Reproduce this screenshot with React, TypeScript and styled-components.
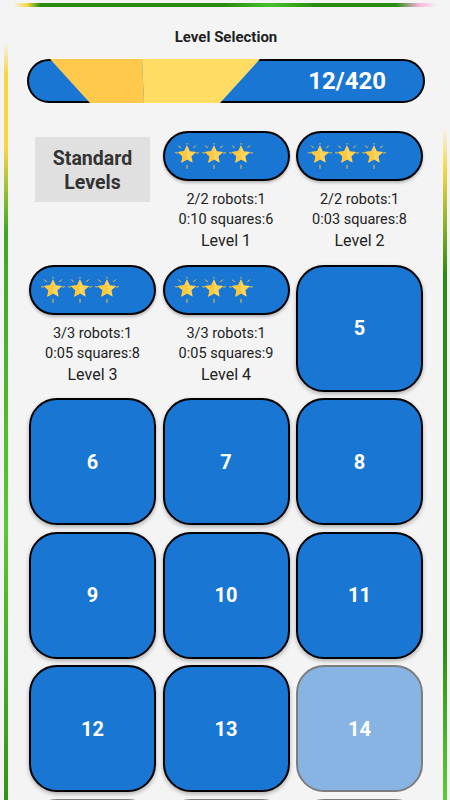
import styled, { createGlobalStyle } from "styled-components";

const GlobalStyle = createGlobalStyle`
  html, body {
    margin: 0;
    padding: 0;
    background: #f4f4f4;
    font-family: Roboto, "Noto Sans", "Liberation Sans", sans-serif;
  }
`;

const Frame = styled.div`
  min-height: 100vh;
  box-sizing: border-box;
  padding: 27px 25px 0 27px;
  background:
    linear-gradient(to right, rgba(244,244,244,0) 3%, #f5d742 6%, #2a8c12 9%, #2a8c12 50%, #45c12a 60%, #2a8c12 70%, #2a8c12 88%, #f7b2d9 93%, rgba(244,244,244,0) 97%) 0 3px / 100% 4px no-repeat,
    linear-gradient(to bottom, rgba(244,244,244,0) 4%, #f5d742 7%, #f5d742 14%, #3aa822 22%, #56c832 50%, #2a8c12 80%, #2a8c12 100%) 4px 0 / 4px 100% no-repeat,
    linear-gradient(to bottom, rgba(244,244,244,0) 12%, #f5d742 16%, #2a8c12 26%, #2a8c12 60%, #5acb35 75%, #2a8c12 100%) 443px 0 / 4px 100% no-repeat,
    #f4f4f4;
`;

const Title = styled.h1`
  margin: 0 0 12px;
  text-align: center;
  font-size: 15px;
  line-height: 20px;
  font-weight: 700;
  color: #222;
`;

const ProgressBar = styled.div`
  position: relative;
  height: 44px;
  box-sizing: border-box;
  border: 2px solid #000;
  border-radius: 22px;
  background: #1976d2;
  display: flex;
  align-items: center;
  justify-content: flex-end;
  padding-right: 37px;
  margin-bottom: 28px;
`;

const Funnel = styled.svg`
  position: absolute;
  left: -2px;
  top: -2px;
`;

const ProgressText = styled.span`
  position: relative;
  color: #fff;
  font-size: 24px;
  font-weight: 700;
`;

const Grid = styled.div`
  display: grid;
  grid-template-columns: repeat(3, 1fr);
  grid-auto-rows: 127px;
  gap: 6.5px;
  margin: 0 0 0 2px;
  width: 394px;
`;

const Heading = styled.div`
  margin: 6px;
  height: 65px;
  box-sizing: border-box;
  padding-top: 3px;
  background: #e0e0e0;
  display: flex;
  align-items: center;
  justify-content: center;
  text-align: center;
  font-size: 19.5px;
  line-height: 24px;
  font-weight: 700;
  color: #333;
`;

const Done = styled.div`
  display: flex;
  flex-direction: column;
  align-items: center;
`;

const Pill = styled.div`
  align-self: stretch;
  height: 50px;
  box-sizing: border-box;
  border: 2px solid #000;
  border-radius: 25px;
  background: #1976d2;
  display: flex;
  align-items: center;
  gap: 3px;
  padding-left: 10px;
  margin-bottom: 9px;
  box-shadow: 0 2px 3px rgba(0, 0, 0, 0.25);
`;

const Stat = styled.div`
  font-size: 14.5px;
  line-height: 20px;
  color: #222;
`;

const LevelName = styled.div`
  font-size: 16px;
  line-height: 22px;
  color: #222;
`;

const LevelButton = styled.button<{ $locked?: boolean }>`
  box-sizing: border-box;
  width: 100%;
  height: 100%;
  border: 2px solid ${(p) => (p.$locked ? "#7d7d7d" : "#000")};
  border-radius: 28px;
  background: ${(p) => (p.$locked ? "#87b4e3" : "#1976d2")};
  color: #fff;
  font-family: inherit;
  font-size: 20px;
  font-weight: 700;
  box-shadow: ${(p) => (p.$locked ? "none" : "0 2px 4px rgba(0, 0, 0, 0.3)")};
  padding: 0;
`;

const Star = () => (
  <svg width="24" height="26" viewBox="0 0 22 24">
    <g stroke="#ffc83d" strokeWidth="0.9" strokeLinecap="round">
      <line x1="3.2" y1="2.6" x2="4.9" y2="4.4" />
      <line x1="18.8" y1="2.6" x2="17.1" y2="4.4" />
      <line x1="0.4" y1="9" x2="2.2" y2="9.3" />
      <line x1="21.6" y1="9" x2="19.8" y2="9.3" />
      <line x1="11" y1="20.5" x2="11" y2="23.5" />
      <line x1="11" y1="0.2" x2="11" y2="1" />
    </g>
    <path d="M11 2 L13.6 7.5 L19.6 8.2 L15.1 12.3 L16.3 18.2 L11 15.2 L5.7 18.2 L6.9 12.3 L2.4 8.2 L8.4 7.5 Z" fill="#ffd45a" />
    <path d="M11 2 L11 15.2 L5.7 18.2 L6.9 12.3 L2.4 8.2 L8.4 7.5 Z" fill="#ffc83d" />
  </svg>
);

type Completed = { stars: number; robots: string; time: string; squares: number };

const completed: Completed[] = [
  { stars: 3, robots: "2/2", time: "0:10", squares: 6 },
  { stars: 3, robots: "2/2", time: "0:03", squares: 8 },
  { stars: 3, robots: "3/3", time: "0:05", squares: 8 },
  { stars: 3, robots: "3/3", time: "0:05", squares: 9 },
];

const App = () => {
  const open = Array.from({ length: 16 }, (_, i) => i + 5);

  return (
    <>
      <GlobalStyle />
      <Frame>
        <Title>Level Selection</Title>
        <ProgressBar>
          <Funnel width="398" height="44" viewBox="0 0 398 44">
            <polygon points="23,0 115,0 117,44 63,44" fill="#ffc94c" />
            <polygon points="115,0 233,0 193,44 117,44" fill="#ffdc64" />
          </Funnel>
          <ProgressText>12/420</ProgressText>
        </ProgressBar>
        <Grid>
          <Heading>
            Standard
            <br />
            Levels
          </Heading>
          {completed.map((c, i) => (
            <Done key={i}>
              <Pill>
                {Array.from({ length: c.stars }, (_, s) => (
                  <Star key={s} />
                ))}
              </Pill>
              <Stat>{c.robots} robots:1</Stat>
              <Stat>
                {c.time} squares:{c.squares}
              </Stat>
              <LevelName>Level {i + 1}</LevelName>
            </Done>
          ))}
          {open.map((n) => (
            <LevelButton key={n} $locked={n >= 14}>
              {n}
            </LevelButton>
          ))}
        </Grid>
      </Frame>
    </>
  );
};

export default App;
